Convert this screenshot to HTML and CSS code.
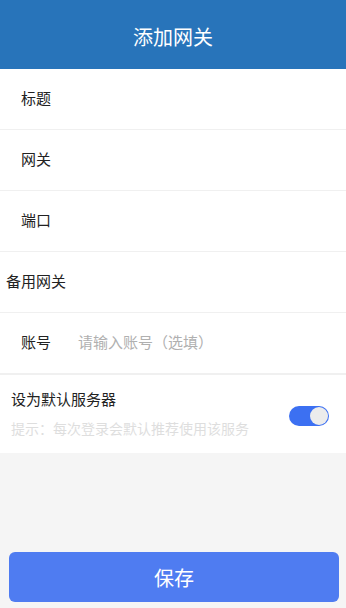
FILE: index.html
```html
<!DOCTYPE html>
<html lang="zh">
<head>
<meta charset="utf-8">
<link rel="stylesheet" href="styles.css">
</head>
<body>
<div class="page">
  <header class="header">添加网关</header>
  <div class="form">
    <div class="row"><span class="label">标题</span></div>
    <div class="row"><span class="label">网关</span></div>
    <div class="row"><span class="label">端口</span></div>
    <div class="row row-wide"><span class="label">备用网关</span></div>
    <div class="row"><span class="label">账号</span><span class="placeholder">请输入账号（选填）</span></div>
    <div class="switch-row">
      <div class="switch-text">
        <div class="switch-title">设为默认服务器</div>
        <div class="switch-hint">提示：每次登录会默认推荐使用该服务</div>
      </div>
      <div class="toggle"><div class="knob"></div></div>
    </div>
  </div>
  <div class="spacer"></div>
  <div class="footer"><button class="save">保存</button></div>
</div>
</body>
</html>
```
FILE: styles.css
```css
html, body {
  margin: 0;
  padding: 0;
  height: 100%;
}
body {
  font-family: "Noto Sans CJK SC", "Noto Sans", sans-serif;
  background: #f5f5f5;
}
.page {
  display: flex;
  flex-direction: column;
  height: 608px;
}
.header {
  height: 69px;
  background: #2874ba;
  color: #fff;
  font-size: 20px;
  display: flex;
  align-items: center;
  justify-content: center;
  padding-top: 3px;
  box-sizing: border-box;
}
.form {
  background: #fff;
}
.row {
  height: 61px;
  box-sizing: border-box;
  border-bottom: 1px solid #f0f0f0;
  display: flex;
  align-items: center;
  padding-left: 21px;
  padding-bottom: 3px;
  font-size: 15px;
  color: #222;
}
.row-wide {
  padding-left: 6px;
}
.label {
  width: 57px;
  flex: none;
}
.row-wide .label {
  width: auto;
}
.placeholder {
  color: #b0b0b0;
}
.switch-row {
  height: 79px;
  border-top: 1px solid #f0f0f0;
  box-sizing: border-box;
  display: flex;
  align-items: center;
  padding: 0 17px 3px 11px;
}
.switch-text {
  flex: 1;
}
.switch-title {
  font-size: 15px;
  color: #222;
  line-height: 20px;
}
.switch-hint {
  font-size: 14px;
  color: #dedede;
  line-height: 18px;
  margin-top: 10px;
}
.toggle {
  width: 40px;
  height: 20px;
  border-radius: 10px;
  background: #3c70f2;
  display: flex;
  align-items: center;
  justify-content: flex-end;
  padding: 0 1px;
  box-sizing: border-box;
  margin-top: 6px;
}
.knob {
  width: 18px;
  height: 18px;
  border-radius: 50%;
  background: #ececec;
}
.spacer {
  flex: 1;
}
.footer {
  padding: 0 7px 6px 9px;
}
.save {
  width: 100%;
  height: 50px;
  border: none;
  border-radius: 6px;
  background: #4f7cf1;
  color: #fff;
  font-family: inherit;
  font-size: 20px;
  display: block;
}
```
